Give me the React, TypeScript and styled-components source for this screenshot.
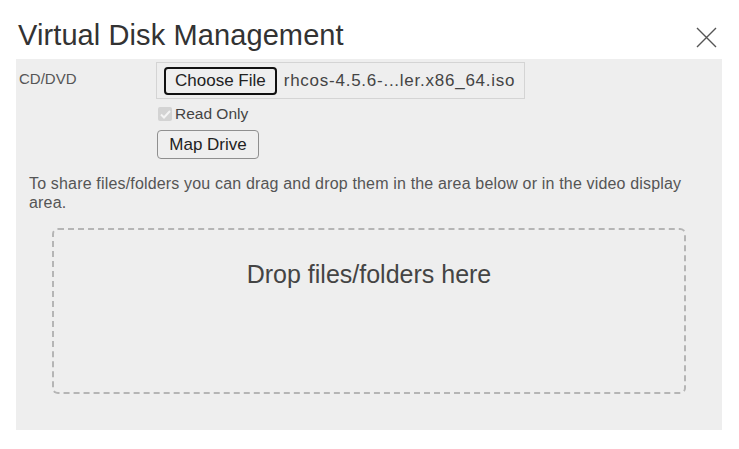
import React from "react";
import styled, { createGlobalStyle } from "styled-components";

const Global = createGlobalStyle`
  html, body { margin: 0; padding: 0; background: #ffffff; }
  body { font-family: "Liberation Sans", Arial, sans-serif; color: #333; }
`;

const Dialog = styled.div`
  width: 739px;
  height: 449px;
  box-sizing: border-box;
  padding: 0 17px 0 16px;
  display: flex;
  flex-direction: column;
`;

const Header = styled.div`
  height: 59px;
  display: flex;
  align-items: flex-start;
  justify-content: space-between;
`;

const Title = styled.h1`
  margin: 17px 0 0 2px;
  font-size: 29px;
  line-height: 36px;
  font-weight: 400;
  color: #333;
  letter-spacing: 0.1px;
`;

const Close = styled.button`
  margin: 27px 5px 0 0;
  padding: 0;
  width: 21px;
  height: 21px;
  border: none;
  background: transparent;
  display: flex;
  svg { display: block; }
`;

const Panel = styled.div`
  background: #eeeeee;
  height: 371px;
  box-sizing: border-box;
  padding: 3px 0 0 0;
  display: flex;
  flex-direction: column;
`;

const DriveRow = styled.div`
  display: grid;
  grid-template-columns: 140px 1fr;
`;

const Label = styled.div`
  padding: 8px 0 0 3px;
  font-size: 15px;
  line-height: 18px;
  color: #555;
`;

const Controls = styled.div`
  display: flex;
  flex-direction: column;
  align-items: flex-start;
`;

const FileBox = styled.div`
  width: 369px;
  height: 37px;
  box-sizing: border-box;
  border: 1px solid #d4d4d4;
  display: flex;
  align-items: center;
  padding: 0 7px;
  gap: 7px;
`;

const Button = styled.button<{ $focused?: boolean }>`
  font-family: "Liberation Sans", Arial, sans-serif;
  font-size: 17px;
  line-height: 20px;
  color: #222;
  background: #efefef;
  border: ${(p) => (p.$focused ? "2px solid #111" : "1px solid #8f8f8f")};
  border-radius: 4px;
  box-sizing: border-box;
  padding: 0 9px;
  height: ${(p) => (p.$focused ? "28px" : "29px")};
`;

const FileName = styled.span`
  font-size: 17px;
  letter-spacing: 0.75px;
  color: #444;
  white-space: nowrap;
`;

const CheckRow = styled.label`
  display: flex;
  align-items: center;
  margin: 6px 0 0 2px;
  font-size: 15.5px;
  line-height: 18px;
  color: #444;
`;

const Check = styled.span`
  width: 14px;
  height: 14px;
  box-sizing: border-box;
  background: #d3d3d3;
  border-radius: 2px;
  display: flex;
  align-items: center;
  justify-content: center;
  margin-right: 3px;
`;

const MapButton = styled(Button)`
  margin: 7px 0 0 1px;
  width: 102px;
`;

const Help = styled.p`
  margin: 15px 0 0 13px;
  width: 672px;
  font-size: 16px;
  line-height: 19px;
  letter-spacing: 0.17px;
  color: #555;
`;

const DropZone = styled.div`
  margin: 16px 36px 0 36px;
  height: 166px;
  box-sizing: border-box;
  border: 2px dashed #b5b5b5;
  border-radius: 6px;
  display: flex;
  justify-content: center;
  padding-top: 30px;
  font-size: 25px;
  line-height: 28px;
  color: #444;
`;

export default function App() {
  return (
    <>
      <Global />
      <Dialog>
        <Header>
          <Title>Virtual Disk Management</Title>
          <Close aria-label="Close">
            <svg width="21" height="21" viewBox="0 0 21 21">
              <path d="M1 1 L20 20 M20 1 L1 20" stroke="#555" strokeWidth="1.4" fill="none" />
            </svg>
          </Close>
        </Header>
        <Panel>
          <DriveRow>
            <Label>CD/DVD</Label>
            <Controls>
              <FileBox>
                <Button $focused>Choose File</Button>
                <FileName>rhcos-4.5.6-...ler.x86_64.iso</FileName>
              </FileBox>
              <CheckRow>
                <Check>
                  <svg width="11" height="9" viewBox="0 0 11 9">
                    <path d="M1 4.5 L4 7.5 L10 1" stroke="#f4f4f4" strokeWidth="2" fill="none" />
                  </svg>
                </Check>
                Read Only
              </CheckRow>
              <MapButton>Map Drive</MapButton>
            </Controls>
          </DriveRow>
          <Help>
            To share files/folders you can drag and drop them in the area below or in the video display
            area.
          </Help>
          <DropZone>Drop files/folders here</DropZone>
        </Panel>
      </Dialog>
    </>
  );
}
